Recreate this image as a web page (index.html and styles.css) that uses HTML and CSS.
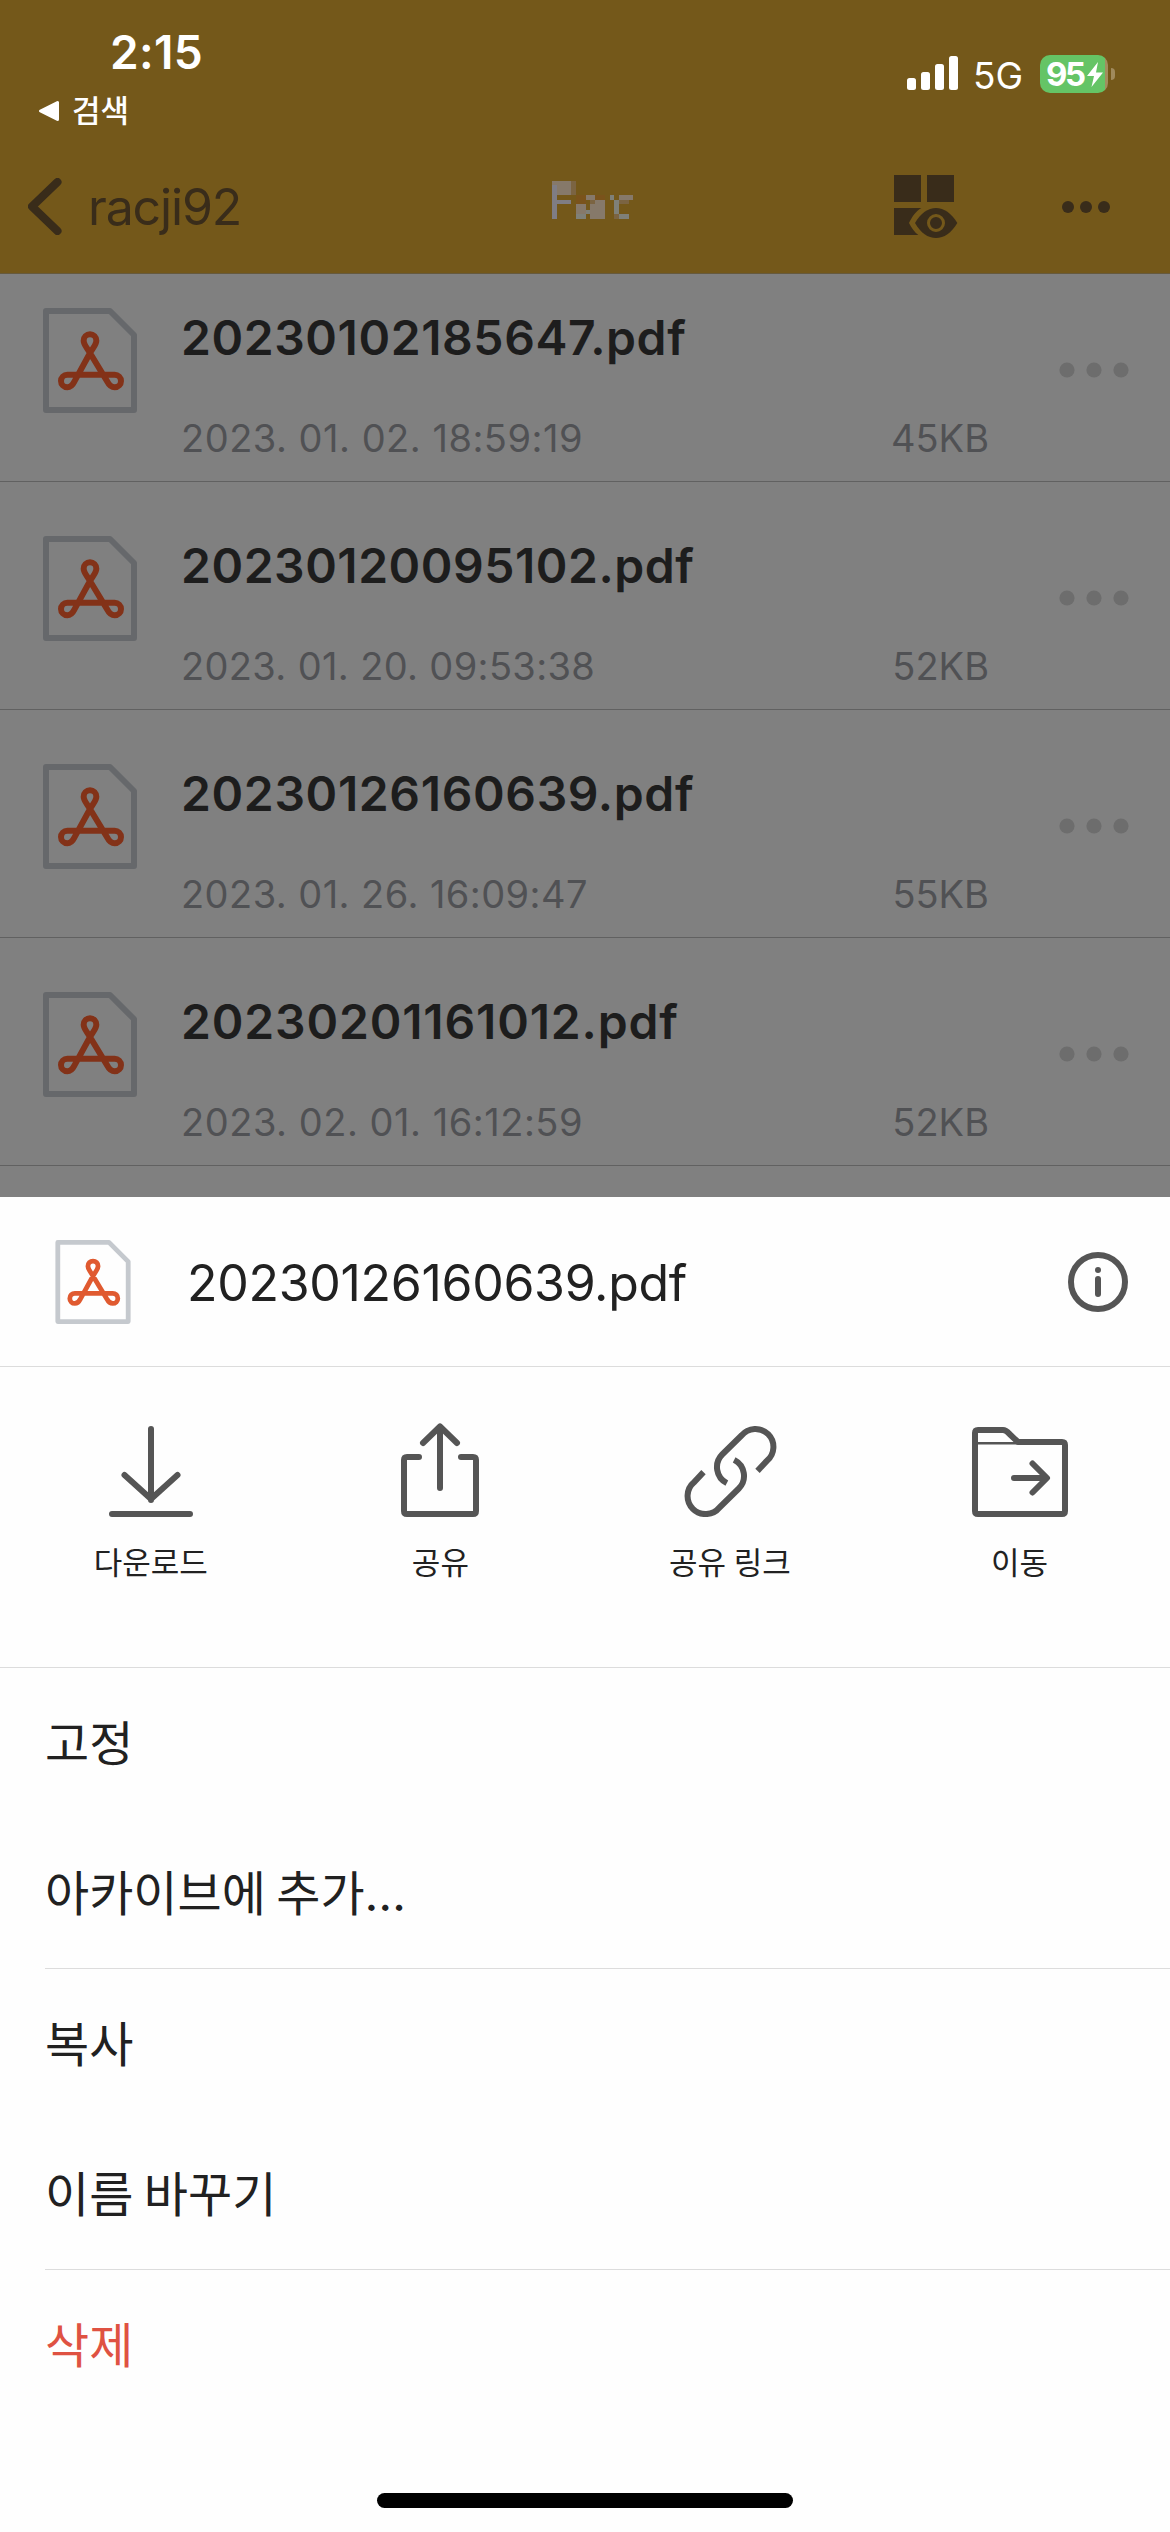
FILE: index.html
```html
<!DOCTYPE html>
<html lang="ko">
<head>
<meta charset="utf-8">
<title>파일 메뉴</title>
<link rel="stylesheet" href="styles.css">
</head>
<body>
<svg class="defs" aria-hidden="true">
  <symbol id="pdf" viewBox="0 0 282 315">
    <path class="pdf-page" d="M9 9H201L273 81V306H9Z"/>
    <path class="pdf-mark" transform="translate(-39 -37)" d="M180 172C170 155 161 146 161 135A19 19 0 0 1 199 135C199 146 190 155 180 172L133 258C128 268 122 275 112 275A19 19 0 0 1 112 237H254A19 19 0 0 1 254 275C243 275 237 268 232 258Z"/>
  </symbol>
  <symbol id="dots" viewBox="0 0 70 16">
    <circle cx="8" cy="8" r="7.6"/><circle cx="35" cy="8" r="7.6"/><circle cx="62" cy="8" r="7.6"/>
  </symbol>
</svg>

<header class="header">
  <div class="status">
    <div class="status-left">
      <div class="time">2:15</div>
      <div class="back-app">
        <svg width="22" height="22" viewBox="0 0 22 22"><path d="M2.500 11L19.500 2.500V19.500Z" fill="#fff" stroke="#fff" stroke-width="3" stroke-linejoin="round"/></svg>
        <span>검색</span>
      </div>
    </div>
    <div class="status-right">
      <svg class="signal" width="51" height="34" viewBox="0 0 51 34" fill="#fff">
        <rect x="0" y="22" width="9" height="12" rx="2.500"/><rect x="14" y="16" width="9" height="18" rx="2.500"/><rect x="28" y="8" width="9" height="26" rx="2.500"/><rect x="42" y="0" width="9" height="34" rx="2.500"/>
      </svg>
      <span class="network">5G</span>
      <div class="battery">
        <span>95</span>
        <svg width="16" height="25" viewBox="0 0 16 25"><path d="M11 0L0 14H7L4.500 25L16 10.500H9Z" fill="#fff"/></svg>
      </div>
      <i class="battery-nub"></i>
    </div>
  </div>
  <nav class="nav">
    <svg width="34" height="57" viewBox="0 0 34 57"><path d="M29.500 4L4 28.500L29.500 53" fill="none" stroke="#392c1a" stroke-width="8" stroke-linecap="round" stroke-linejoin="round"/></svg>
    <span class="nav-back">racji92</span>
    <svg class="nav-title" width="82" height="39" viewBox="0 0 246 117" shape-rendering="crispEdges">
      <g fill="#86796a"><path d="M14 0H57V42H14Z"/><path d="M72 69H102V99H72Z"/><path d="M102 42H129V57H102Z"/><path d="M129 57H159V114H114V69H129Z"/><path d="M201 42H243V57H201Z"/></g>
      <g fill="#7f7d84"><path d="M0 12H15V114H0Z"/><path d="M15 57H57V69H15Z"/></g>
      <g fill="#7f8078"><path d="M72 99H102V114H72Z"/><path d="M174 42H186V57H174Z"/><path d="M186 57H201V99H186Z"/><path d="M201 99H231V114H201Z"/><path d="M102 87H114V99H102Z"/></g>
      <path fill="#86796a" d="M0 0H15V12H0Z"/>
      <g fill="#7b6442"><path d="M57 0H72V42H57Z"/><path d="M114 57H129V69H114Z"/><path d="M186 99H201V114H186Z"/><path d="M201 57H231V69H201Z"/></g>
      <g fill="#7a531b"><path d="M72 42H102V69H72Z"/><path d="M129 42H159V57H129Z"/></g>
    </svg>
    <svg class="nav-view" width="64" height="64" viewBox="0 0 192 192" fill="#392c1a">
      <path d="M0 0H81V81H0ZM99 0H180V81H99ZM0 99H82C66 108 54 125 45 144C52 158 62 172 73 180H0Z"/>
      <path d="M63 144C80 115 102 99 126 99S172 115 190 144C172 174 150 189 126 189S80 174 63 144Z"/>
      <circle cx="126" cy="144" r="22.500" stroke="#74581a" stroke-width="9"/>
    </svg>
    <svg class="nav-more" width="48" height="12" viewBox="0 0 48 12" fill="#392c1a"><circle cx="6" cy="6" r="6"/><circle cx="24" cy="6" r="6"/><circle cx="42" cy="6" r="6"/></svg>
  </nav>
</header>

<main class="list">
  <div class="row">
    <svg class="file-icon"><use href="#pdf"/></svg>
    <div class="info"><div class="name n1">20230102185647.pdf</div><div class="meta"><span class="d1">2023. 01. 02. 18:59:19</span><span>45KB</span></div></div>
    <svg class="more"><use href="#dots"/></svg>
  </div>
  <div class="row">
    <svg class="file-icon"><use href="#pdf"/></svg>
    <div class="info"><div class="name n2">20230120095102.pdf</div><div class="meta"><span class="d2">2023. 01. 20. 09:53:38</span><span>52KB</span></div></div>
    <svg class="more"><use href="#dots"/></svg>
  </div>
  <div class="row">
    <svg class="file-icon"><use href="#pdf"/></svg>
    <div class="info"><div class="name n3">20230126160639.pdf</div><div class="meta"><span class="d3">2023. 01. 26. 16:09:47</span><span>55KB</span></div></div>
    <svg class="more"><use href="#dots"/></svg>
  </div>
  <div class="row">
    <svg class="file-icon"><use href="#pdf"/></svg>
    <div class="info"><div class="name n4">20230201161012.pdf</div><div class="meta"><span class="d4">2023. 02. 01. 16:12:59</span><span>52KB</span></div></div>
    <svg class="more"><use href="#dots"/></svg>
  </div>
</main>

<section class="sheet">
  <div class="sheet-head">
    <svg class="sheet-icon"><use href="#pdf"/></svg>
    <span class="sheet-name">20230126160639.pdf</span>
    <svg class="sheet-info" width="60" height="60" viewBox="0 0 60 60" fill="none" stroke="#555" stroke-width="6" stroke-linecap="round"><circle cx="30" cy="30" r="27"/><path d="M30 27V42"/><circle cx="30" cy="18" r="3" fill="#555" stroke="none"/></svg>
  </div>
  <div class="actions">
    <div class="action">
      <svg viewBox="0 0 100 100"><path d="M50 12V83M23.500 58L50 82L76.500 58M11 97H89"/></svg>
      <span>다운로드</span>
    </div>
    <div class="action">
      <svg viewBox="0 0 100 100"><path d="M50 10V71M33 26L50 9.500L67 26M29 40H17Q14 40 14 43V94Q14 97 17 97H83Q86 97 86 94V43Q86 40 83 40H71"/></svg>
      <span>공유</span>
    </div>
    <div class="action">
      <svg viewBox="0 0 100 100"><g class="link" transform="translate(-19.500 -17.500) scale(.33333)"><path d="M291 214L319 184A54 54 0 1 0 243 108L185 165A54 54 0 0 0 199 251"/><path d="M129 218L101 248A54 54 0 1 0 177 324L235 267A54 54 0 0 0 221 181"/></g></svg>
      <span>공유 링크</span>
    </div>
    <div class="action">
      <svg viewBox="0 0 100 100"><path d="M5 16V94Q5 97 8 97H92Q95 97 95 94V28Q95 25 92 25H48L39.500 17Q36 13 33 13H8Q5 13 5 16ZM44 61H76M62.500 46.500L77 61L62.500 75.500"/><path class="thin" d="M6 26.300H48"/></svg>
      <span>이동</span>
    </div>
  </div>
  <div class="menu">
    <div class="group"><div class="item">고정</div><div class="item">아카이브에 추가…</div></div>
    <div class="group"><div class="item">복사</div><div class="item">이름 바꾸기</div></div>
    <div class="group"><div class="item danger">삭제</div></div>
  </div>
  <div class="home"></div>
</section>
</body>
</html>
```
FILE: styles.css
```css
* { box-sizing: border-box; }
body {
  margin: 0;
  width: 1170px;
  height: 2532px;
  display: flex;
  flex-direction: column;
  overflow: hidden;
  background: #808080;
  font-family: Inter, "Noto Sans CJK KR", sans-serif;
  font-feature-settings: "calt" 0;
  white-space: nowrap;
}
svg { display: block; flex: none; }
.defs { position: absolute; width: 0; height: 0; }

.header {
  flex: none;
  height: 274px;
  background: #74581a;
  border-bottom: 1px solid #665a3e;
}
.status {
  display: flex;
  justify-content: space-between;
  height: 140px;
  padding: 24px 55px 0 38px;
  color: #fff;
}
.time {
  padding-left: 72px;
  font-size: 46px;
  font-weight: 600;
  line-height: 56px;
  letter-spacing: 0.3px;
}
.back-app {
  display: flex;
  align-items: center;
  gap: 12px;
  height: 62px;
  font-size: 31px;
  font-weight: 500;
  line-height: 64px;
}
.status-right { display: flex; align-items: center; height: 100px; }
.signal { margin-top: -2px; }
.network {
  margin-left: 15px;
  width: 50px;
  padding-top: 3px;
  font-size: 37px;
  line-height: 44px;
}
.battery {
  display: flex;
  align-items: center;
  gap: 3px;
  margin-left: 17px;
  width: 68px;
  height: 38px;
  padding-left: 6px;
  border-radius: 10px;
  background: linear-gradient(90deg, #65c466 65px, #a38d5e 65px);
  font-size: 33px;
  font-weight: 700;
  letter-spacing: -2.5px;
}
.battery-nub {
  margin-left: 3px;
  width: 4px;
  height: 12px;
  border-radius: 0 6px 6px 0;
  background: #a08a5c;
}
.nav {
  display: flex;
  align-items: center;
  height: 133px;
  padding: 0 60px 0 28px;
}
.nav-back {
  margin-left: 26px;
  width: 464px;
  font-size: 50px;
  line-height: 60px;
  letter-spacing: -1.15px;
  color: #392c1a;
}
.nav-title { margin-top: -13px; }
.nav-view { margin-left: auto; }
.nav-more { margin-left: 104px; }

.list { flex: none; height: 923px; overflow: hidden; }
.row {
  display: flex;
  height: 228px;
  padding: 0 41px 0 43px;
  border-bottom: 1px solid #616161;
}
.row:first-child { margin-top: -20px; }
.file-icon { width: 94px; height: 105px; margin-top: 54px; }
.pdf-page {
  fill: none;
  stroke: var(--page, #66686b);
  stroke-width: 18;
  stroke-linejoin: round;
}
.pdf-mark {
  fill: none;
  stroke: var(--mark, #833218);
  stroke-width: 18;
  stroke-linejoin: round;
}
.info { width: 808px; margin: 54px 0 0 44px; }
.name {
  font-size: 48px;
  font-weight: 600;
  line-height: 60px;
  color: #1d1d1d;
}
.n1 { letter-spacing: 0.58px; }
.n2 { letter-spacing: 0.53px; }
.n3 { letter-spacing: 0.64px; }
.n4 { letter-spacing: 0.85px; }
.meta {
  display: flex;
  justify-content: space-between;
  margin-top: 46px;
  font-size: 38px;
  line-height: 48px;
  color: #505154;
}
.d1 { letter-spacing: 0.5px; }
.d2 { letter-spacing: 0.35px; }
.d3 { letter-spacing: 0.44px; }
.d4 { letter-spacing: 0.52px; }
.more { width: 70px; height: 16px; margin: 108px 0 0 auto; fill: #6d6d6d; }

.sheet {
  flex: 1;
  display: flex;
  flex-direction: column;
  background: #fefefe;
  color: #212121;
}
.sheet-head {
  display: flex;
  align-items: center;
  height: 170px;
  padding: 0 42px 0 55px;
  border-bottom: 1px solid #dcdcdc;
}
.sheet-icon {
  --page: #c5c9ce;
  --mark: #e05a30;
  width: 76px;
  height: 84px;
}
.sheet-name {
  margin-left: 56px;
  padding-top: 2px;
  font-size: 50px;
  line-height: 60px;
  letter-spacing: -0.3px;
}
.sheet-info { margin-left: auto; }
.actions {
  display: grid;
  grid-template-columns: repeat(4, 289.6px);
  height: 301px;
  padding: 50px 0 0 6px;
  border-bottom: 1px solid #dcdcdc;
}
.action {
  display: flex;
  flex-direction: column;
  align-items: center;
  font-size: 31px;
  line-height: 40px;
  word-spacing: -1px;
}
.action svg {
  width: 100px;
  height: 100px;
  fill: none;
  stroke: #555;
  stroke-width: 6;
  stroke-linecap: round;
  stroke-linejoin: round;
}
.action .link { stroke-width: 18; stroke-linecap: butt; }
.action .thin { stroke-width: 2.6; stroke-linecap: butt; }
.action span { margin-top: 26px; }
.group { margin-left: 45px; }
.group + .group { border-top: 1px solid #dcdcdc; }
.item {
  height: 150px;
  font-size: 48px;
  line-height: 152px;
  word-spacing: -3px;
}
.danger { color: #df5242; }
.home {
  width: 416px;
  height: 15px;
  margin: auto auto 24px;
  border-radius: 8px;
  background: #000;
}
```
